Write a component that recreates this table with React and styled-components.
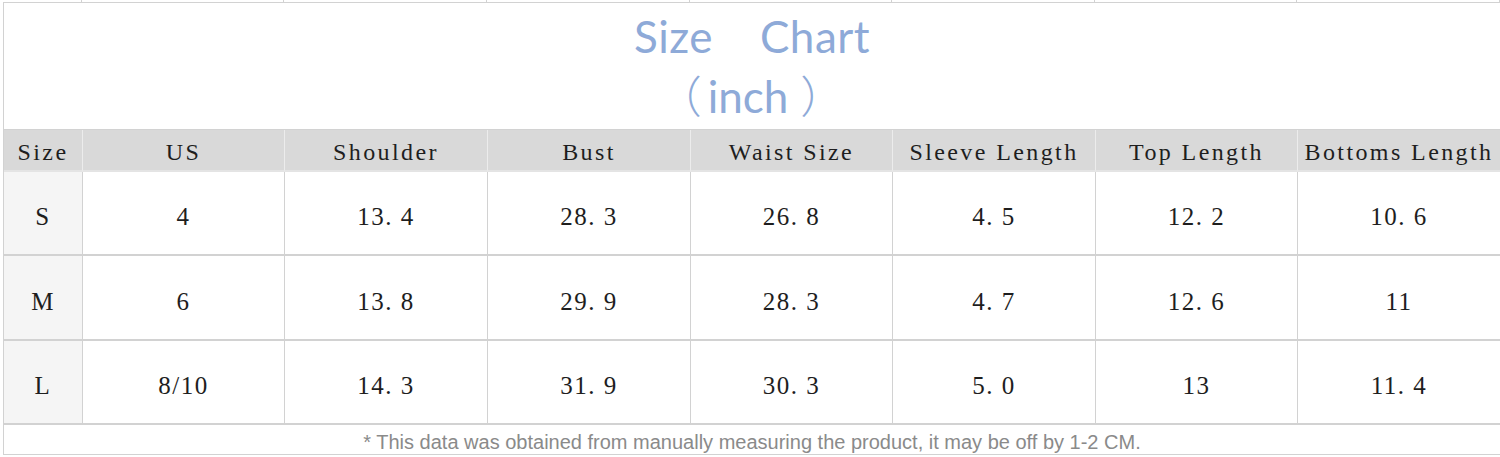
import React from "react";
import styled, { createGlobalStyle } from "styled-components";

const Global = createGlobalStyle`
  html, body { margin: 0; padding: 0; background: #fff; }
  body { width: 1500px; height: 457px; overflow: hidden; }
`;

const COLS = "79px 202px 203px 203px 202px 203px 202px 203px";
const LINE = "#d2d2d2";

const Page = styled.div`
  width: 1500px;
  height: 457px;
  padding-left: 3px;
  box-sizing: border-box;
  display: flex;
  flex-direction: column;
`;

const TickRow = styled.div`
  display: grid;
  grid-template-columns: ${COLS};
  height: 2px;
`;

const Tick = styled.div`
  border-right: 1px solid ${LINE};
`;

const Sheet = styled.div`
  border-top: 1px solid ${LINE};
  border-left: 1px solid ${LINE};
  border-bottom: 1px solid ${LINE};
  display: flex;
  flex-direction: column;
`;

const TitleBlock = styled.div`
  height: 126px;
  display: flex;
  flex-direction: column;
  align-items: center;
  color: #8eaad8;
  font-family: Lato, "Noto Sans", sans-serif;
  font-size: 44px;
  line-height: 1;
`;

const TitleLine = styled.div`
  padding-top: 11px;
  white-space: pre;
  letter-spacing: 0.5px;
`;

const UnitLine = styled.div`
  padding-top: 14px;
  padding-right: 2px;
  font-family: Lato, "Noto Sans CJK SC", sans-serif;
  white-space: pre;
`;

const Paren = styled.span`
  font-family: "Noto Sans CJK SC", sans-serif;
  font-weight: 300;
  margin: ${(p) => (p.$open ? "0 6px 0 0" : "0 0 0 12px")};
`;

const Grid = styled.div`
  display: grid;
  grid-template-columns: ${COLS};
  grid-template-rows: 42px 84px 85px 84px;
  border-top: 1px solid ${LINE};
`;

const Cell = styled.div`
  display: flex;
  align-items: center;
  justify-content: center;
  box-sizing: border-box;
  border-right: 1px solid ${(p) => (p.$head ? "#ececec" : LINE)};
  border-bottom: 2px solid ${(p) => (p.$head ? "#e4e4e4" : LINE)};
  background: ${(p) => (p.$head ? "#d9d9d9" : p.$side ? "#f5f5f5" : "#fff")};
  color: #1e1e1e;
  font-family: "Liberation Serif", "DejaVu Serif", serif;
  font-size: ${(p) => (p.$head ? "24px" : "25px")};
  letter-spacing: ${(p) => (p.$head ? "2.4px" : "1.5px")};
  white-space: pre;
  padding-top: ${(p) => (p.$head ? "5px" : "8px")};
`;

const Footer = styled.div`
  height: 29px;
  display: flex;
  align-items: center;
  justify-content: center;
  color: #8a8a8a;
  font-family: "Liberation Sans", Arial, sans-serif;
  font-size: 20px;
  padding-top: 5px;
  box-sizing: border-box;
`;

const headers = ["Size", "US", "Shoulder", "Bust", "Waist Size", "Sleeve Length", "Top Length", "Bottoms Length"];
const rows = [
  ["S", "4", "13. 4", "28. 3", "26. 8", "4. 5", "12. 2", "10. 6"],
  ["M", "6", "13. 8", "29. 9", "28. 3", "4. 7", "12. 6", "11"],
  ["L", "8/10", "14. 3", "31. 9", "30. 3", "5. 0", "13", "11. 4"],
];

export default function App() {
  return (
    <>
      <Global />
      <Page>
        <TickRow>
          {headers.map((h) => (
            <Tick key={h} />
          ))}
        </TickRow>
        <Sheet>
          <TitleBlock>
            <TitleLine>{"Size    Chart"}</TitleLine>
            <UnitLine>
              <Paren $open>（</Paren>inch<Paren>）</Paren>
            </UnitLine>
          </TitleBlock>
          <Grid>
            {headers.map((h) => (
              <Cell key={h} $head>
                {h}
              </Cell>
            ))}
            {rows.map((r) =>
              r.map((v, i) => (
                <Cell key={r[0] + i} $side={i === 0}>
                  {v}
                </Cell>
              ))
            )}
          </Grid>
          <Footer>* This data was obtained from manually measuring the product, it may be off by 1-2 CM.</Footer>
        </Sheet>
      </Page>
    </>
  );
}
